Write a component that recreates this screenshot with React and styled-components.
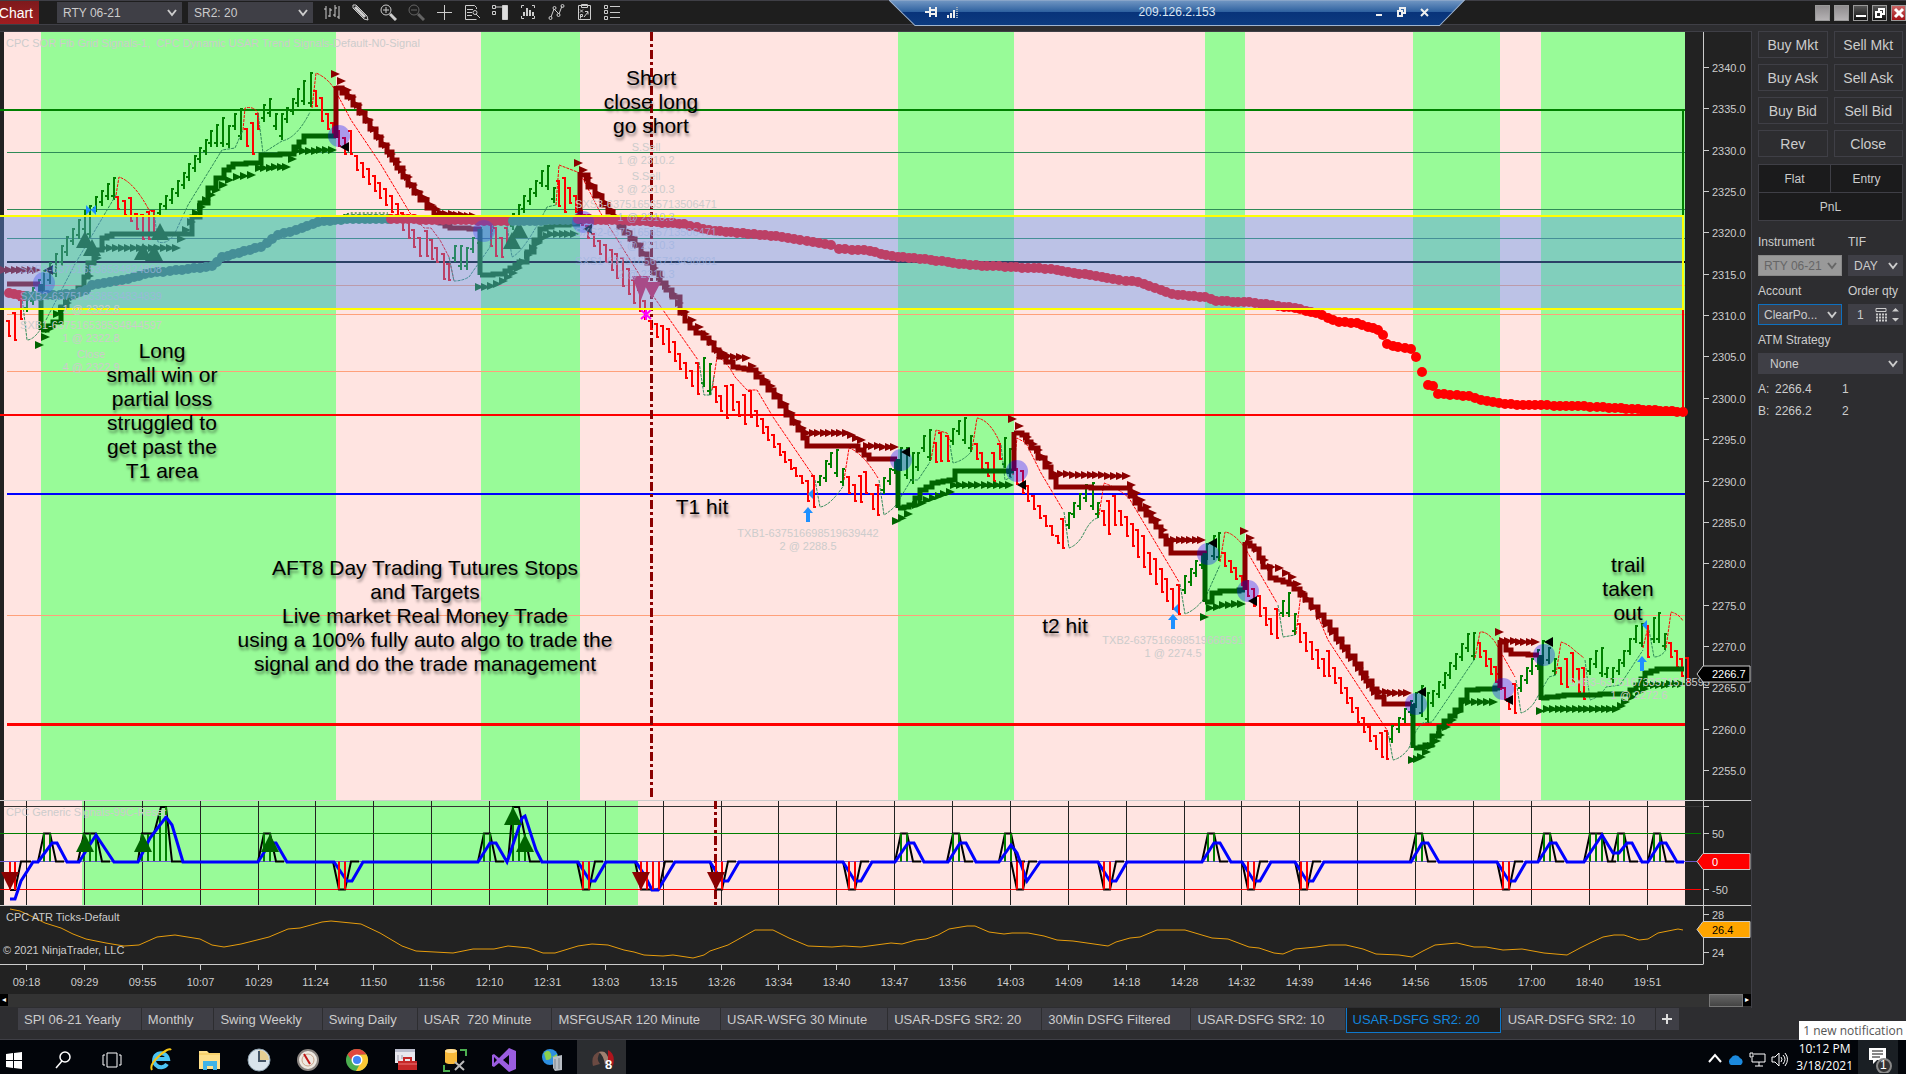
import { useState } from 'react';
import styled, { createGlobalStyle, css } from 'styled-components';

const STEP = 5.79;
const VIEW_W = 1751;
const PINK = '#ffe4e1';
const GREEN = '#98fb98';

/* ---------- chart data ---------- */

const mainBands = [[41, 336], [481, 580], [898, 1014], [1205, 1245], [1413, 1500], [1541, 1685]];

const levels = [
  { y: 152.5, color: '#2e8b57', w: 1 },
  { y: 209.5, color: '#2e8b57', w: 1 },
  { y: 238.5, color: '#2e8b57', w: 1 },
  { y: 262, color: '#000', w: 2 },
  { y: 285.5, color: '#ffa07a', w: 1 },
  { y: 314.5, color: '#ffa07a', w: 1 },
  { y: 371.5, color: '#ffa07a', w: 1 },
  { y: 494, color: '#0000ff', w: 2 },
  { y: 615.5, color: '#ffa07a', w: 1 },
  { y: 724.5, color: '#ff0000', w: 3 },
  { y: 110, color: '#008000', w: 2, from: 0 },
  { y: 415, color: '#ff0000', w: 2, from: 0 },
];

// [up, [x, high, low], ...] - bars between two points are interpolated
const barRuns = [
  [0, [9, 320, 337], [15, 312, 341], [21, 299, 320]],
  [1, [27, 296, 312], [56, 253, 277], [73, 228, 245], [85, 210, 233], [90, 205, 238], [96, 196, 212], [108, 183, 200], [114, 177, 200]],
  [0, [118, 196, 210], [125, 200, 216], [131, 197, 222], [137, 213, 230], [143, 214, 240], [149, 211, 240], [154, 210, 233]],
  [1, [160, 203, 217], [178, 180, 197], [189, 163, 181], [200, 147, 163], [211, 130, 147], [223, 117, 147], [229, 125, 148], [235, 113, 130], [241, 108, 140]],
  [0, [247, 128, 147], [253, 122, 155], [258, 113, 130]],
  [1, [264, 104, 122], [270, 98, 117], [276, 113, 130], [282, 113, 140], [287, 107, 123], [298, 88, 107], [304, 80, 105], [311, 72, 107]],
  [0, [316, 90, 107], [322, 97, 122], [328, 113, 130], [333, 122, 138], [345, 137, 155], [351, 130, 155], [357, 155, 171], [392, 195, 213], [420, 237, 257], [427, 230, 257], [437, 247, 263], [444, 253, 280], [449, 263, 281]],
  [1, [455, 245, 262], [461, 245, 270], [467, 247, 270], [473, 237, 253], [480, 227, 247]],
  [0, [491, 220, 247], [496, 227, 257], [502, 237, 258], [507, 227, 247]],
  [1, [513, 213, 230], [524, 195, 213], [536, 180, 197], [542, 170, 187], [548, 165, 190], [554, 187, 203]],
  [0, [559, 180, 207], [565, 177, 213], [570, 187, 204], [576, 195, 213], [588, 225, 239], [600, 240, 255], [623, 257, 287], [645, 300, 320], [651, 320, 330], [669, 328, 353], [680, 353, 370], [692, 370, 387], [698, 362, 395]],
  [1, [704, 357, 387], [710, 363, 395]],
  [0, [716, 386, 403], [721, 395, 412], [727, 385, 419], [733, 384, 411], [739, 401, 417], [745, 394, 425], [751, 390, 418], [757, 410, 427], [802, 475, 484], [808, 480, 502], [814, 475, 508]],
  [1, [820, 475, 486], [826, 460, 482], [831, 452, 468], [837, 449, 477], [843, 468, 486]],
  [0, [849, 476, 494], [855, 484, 502], [861, 475, 503], [866, 471, 494], [873, 493, 510], [878, 484, 516]],
  [1, [884, 477, 494], [890, 468, 485], [895, 458, 474], [901, 447, 471], [907, 447, 479], [913, 452, 484], [918, 452, 471], [924, 435, 452], [930, 429, 461]],
  [0, [936, 442, 463], [941, 432, 462], [948, 435, 462]],
  [1, [953, 428, 445], [959, 420, 435], [965, 417, 444], [971, 435, 452]],
  [0, [977, 443, 460], [982, 452, 470], [988, 462, 477], [994, 452, 482], [1000, 443, 460]],
  [1, [1005, 437, 468], [1010, 448, 477]],
  [0, [1017, 468, 485], [1023, 470, 494], [1028, 485, 502], [1058, 535, 544], [1063, 518, 549]],
  [1, [1069, 512, 529], [1074, 502, 518], [1080, 493, 510], [1086, 484, 502], [1093, 482, 510], [1098, 502, 518]],
  [0, [1104, 510, 526], [1109, 500, 535], [1115, 495, 526], [1121, 510, 526], [1144, 535, 568], [1150, 552, 575], [1156, 558, 585], [1173, 588, 610], [1179, 584, 615]],
  [1, [1185, 575, 594], [1196, 560, 577], [1207, 543, 560], [1214, 535, 560], [1219, 532, 561]],
  [0, [1225, 552, 567], [1242, 575, 586], [1248, 580, 597], [1260, 595, 617], [1271, 618, 635], [1277, 608, 639]],
  [1, [1283, 600, 617], [1289, 592, 617], [1295, 613, 635]],
  [0, [1300, 623, 643], [1324, 658, 677], [1329, 650, 677], [1335, 667, 684], [1364, 717, 733], [1376, 735, 750], [1382, 732, 758], [1387, 730, 760]],
  [1, [1392, 725, 743], [1405, 708, 723], [1416, 692, 708], [1422, 685, 717], [1428, 692, 723], [1433, 690, 707], [1456, 653, 670], [1468, 633, 652], [1474, 632, 660]],
  [0, [1480, 642, 658], [1491, 658, 675], [1500, 673, 690], [1509, 700, 710], [1515, 683, 714]],
  [1, [1521, 675, 692], [1532, 658, 675], [1543, 640, 664], [1549, 647, 664], [1555, 658, 675]],
  [0, [1561, 667, 685], [1567, 658, 688], [1573, 652, 683], [1579, 668, 693], [1584, 667, 700]],
  [1, [1590, 658, 675], [1596, 650, 668], [1602, 647, 677], [1607, 667, 678], [1613, 667, 683], [1624, 650, 667], [1636, 625, 643], [1642, 623, 647]],
  [0, [1648, 625, 658]],
  [1, [1654, 617, 643], [1659, 612, 643], [1665, 633, 650]],
  [0, [1671, 642, 658], [1682, 658, 677], [1688, 657, 683]],
];

const stops = [
  {
    color: '#8b0000',
    line: [[7, 284], [40, 284]],
    marks: [[3, 270], [35, 270]],
  },
  {
    color: '#006400',
    drop: [41, 284, 330],
    line: [[41, 330], [53, 322], [61, 307], [67, 297], [78, 288], [84, 277], [88, 263], [94, 250], [102, 238], [112, 234], [188, 234], [192, 217], [200, 203], [208, 188], [216, 178], [224, 170], [233, 164], [253, 163], [261, 155], [286, 154], [294, 147], [304, 136], [336, 136]],
    marks: [[38, 345], [44, 337], [48, 329], [56, 314], [66, 303], [80, 290], [88, 276], [96, 258], [103, 248], [175, 248], [185, 230], [195, 213], [205, 200], [215, 190], [228, 180], [236, 177], [250, 175], [258, 168], [285, 167], [296, 151], [331, 150]],
  },
  {
    color: '#8b0000',
    drop: [336, 86, 138],
    line: [[336, 88], [347, 97], [359, 113], [376, 137], [392, 160], [408, 185], [420, 200], [434, 215], [440, 223], [450, 228], [481, 229]],
    marks: [[334, 74], [340, 81], [346, 90], [362, 112], [379, 137], [396, 162], [412, 185], [430, 205], [440, 213], [472, 216]],
  },
  {
    color: '#006400',
    drop: [480, 229, 275],
    line: [[480, 275], [500, 274], [510, 268], [519, 262], [527, 252], [534, 240], [540, 229], [552, 225], [580, 224]],
    marks: [[478, 287], [490, 286], [502, 281], [512, 273], [522, 262], [532, 248], [541, 238], [550, 234], [573, 234]],
  },
  {
    color: '#8b0000',
    drop: [580, 172, 224],
    line: [[580, 175], [588, 187], [602, 205], [619, 227], [635, 245], [647, 263], [660, 283], [672, 297], [680, 313], [690, 328], [709, 343], [719, 357], [733, 367], [749, 370], [762, 383], [774, 397], [786, 415], [798, 430], [807, 446], [853, 446], [869, 459], [897, 459]],
    marks: [[577, 163], [582, 170], [591, 185], [605, 203], [637, 245], [653, 268], [684, 312], [691, 320], [704, 334], [717, 350], [727, 356], [745, 358], [757, 373], [770, 386], [784, 404], [796, 422], [806, 433], [845, 433], [860, 440], [866, 446], [893, 447]],
  },
  {
    color: '#006400',
    drop: [898, 459, 508],
    line: [[898, 508], [909, 505], [920, 490], [932, 483], [949, 480], [955, 471], [1014, 471]],
    marks: [[895, 521], [901, 518], [907, 514], [915, 505], [926, 500], [949, 492], [953, 485], [1008, 485]],
  },
  {
    color: '#8b0000',
    drop: [1014, 432, 471],
    line: [[1014, 433], [1022, 435], [1031, 448], [1045, 467], [1056, 487], [1125, 488], [1135, 503], [1156, 527], [1171, 553], [1207, 553]],
    marks: [[1011, 419], [1018, 426], [1026, 437], [1037, 450], [1047, 463], [1054, 474], [1125, 476], [1135, 493], [1156, 520], [1168, 540], [1200, 540]],
  },
  {
    color: '#006400',
    drop: [1205, 553, 602],
    line: [[1205, 602], [1208, 602], [1212, 593], [1220, 591], [1245, 590]],
    marks: [[1203, 617], [1209, 608], [1222, 605], [1240, 604]],
  },
  {
    color: '#8b0000',
    drop: [1245, 542, 590],
    line: [[1245, 543], [1254, 549], [1263, 567], [1270, 578], [1289, 584], [1305, 600], [1324, 622], [1342, 647], [1361, 673], [1377, 697], [1384, 704], [1411, 704]],
    marks: [[1243, 531], [1249, 538], [1263, 560], [1270, 567], [1278, 568], [1291, 577], [1306, 599], [1326, 624], [1345, 649], [1364, 677], [1374, 692], [1406, 693]],
  },
  {
    color: '#006400',
    drop: [1413, 704, 748],
    line: [[1414, 748], [1425, 745], [1439, 727], [1455, 710], [1467, 690], [1500, 688]],
    marks: [[1411, 760], [1420, 757], [1430, 746], [1439, 735], [1457, 712], [1462, 702], [1492, 702]],
  },
  {
    color: '#8b0000',
    drop: [1500, 640, 688],
    line: [[1500, 642], [1506, 650], [1511, 654], [1539, 655]],
    marks: [[1498, 632], [1502, 641], [1534, 642]],
  },
  {
    color: '#006400',
    drop: [1541, 655, 700],
    line: [[1541, 698], [1564, 695], [1624, 694], [1636, 685], [1645, 673], [1657, 669], [1684, 669]],
    marks: [[1539, 711], [1546, 709], [1615, 709], [1624, 702], [1638, 692], [1647, 685], [1680, 684]],
  },
];

const trend = [
  { color: '#ff0000', pts: [[9, 293], [24, 296]] },
  { color: '#2e8b57', pts: [[27, 296], [53, 295], [73, 294], [86, 290], [92, 285], [122, 280], [151, 273], [188, 269], [212, 266], [222, 257], [261, 247], [278, 235], [302, 228], [318, 222], [347, 219], [388, 219]] },
  { color: '#ff0000', pts: [[391, 219], [507, 221]] },
  { color: '#2e8b57', pts: [[513, 221], [574, 220]] },
  { color: '#ff0000', pts: [[578, 219], [640, 221], [684, 224], [709, 230], [782, 237], [831, 245], [839, 249], [864, 250], [892, 256], [925, 259], [970, 265], [1051, 269], [1113, 279], [1138, 282], [1172, 294], [1205, 297], [1216, 301], [1249, 302], [1295, 308], [1316, 313], [1339, 322], [1357, 323], [1378, 330], [1383, 335], [1387, 344], [1398, 347], [1411, 349], [1416, 357], [1422, 372], [1428, 385], [1433, 386], [1438, 394], [1469, 396], [1481, 400], [1499, 403], [1523, 405], [1578, 406], [1615, 408], [1683, 412]] },
];

const RED_ARCS = [
  'M116 195L119 177Q134 182 149 210L154 212',
  'M243 130L245 108Q254 106 258 113',
  'M312 108L316 73Q328 78 335 90L351 120L380 163L410 213L424 228H431L440 240L449 257L454 281',
  'M491 240L495 215',
  'M556 205L559 165L580 173L600 212L649 290L698 360',
  'M712 390L717 357Q726 360 735 377L747 390H757L773 417L814 477',
  'M844 480L849 448Q862 452 878 478',
  'M931 460L936 430L947 433L950 440',
  'M972 450L977 418Q990 420 1000 443',
  'M1013 475L1017 438L1026 443L1041 473L1063 510',
  'M1099 515L1104 483Q1118 488 1129 498L1179 582',
  'M1220 562L1225 532Q1234 533 1245 548L1277 603',
  'M1296 634L1301 593L1314 607L1328 640L1387 730',
  'M1475 658L1480 632Q1487 631 1495 642L1515 677',
  'M1556 674L1561 642Q1568 644 1574 650L1584 658',
  'M1643 648L1648 627',
  'M1666 648L1671 612Q1679 614 1683 621',
];

const GREEN_ARCS = [
  'M22 297L27 340Q36 340 47 318L75 264L116 195',
  'M154 212L158 242Q168 245 175 233L188 205L222 150L235 148L243 130',
  'M258 113L263 153L282 141Q297 138 310 112',
  'M449 257L454 281Q462 281 469 277L490 247L492 226',
  'M507 225L512 257Q524 252 547 207L556 205',
  'M699 362L704 395H711L714 375',
  'M815 480L820 507Q830 506 844 485',
  'M879 480L884 515Q892 510 896 505L911 480H918L930 462',
  'M950 445L953 463Q963 461 971 452',
  'M1001 445L1005 480L1012 477',
  'M1064 512L1069 548Q1078 545 1084 533Q1091 519 1098 518',
  'M1180 584L1185 614Q1198 609 1207 594L1220 565',
  'M1278 605L1283 637L1295 635',
  'M1388 732L1393 760Q1402 758 1409 748Q1416 727 1423 723L1432 722L1474 660',
  'M1516 680L1521 713Q1528 711 1534 703L1549 677L1556 675',
  'M1585 660L1590 700Q1600 697 1606 687L1620 685L1643 650',
  'M1649 630L1654 657Q1661 657 1666 650',
];

const circles = [[44, 283], [339, 136], [484, 231], [583, 222], [901, 460], [1017, 471], [1208, 554], [1248, 591], [1416, 704], [1503, 689], [1544, 655]];
const backMarks = [[49, 270], [345, 147], [588, 229], [906, 452], [1022, 485], [1213, 543], [1253, 601], [1422, 692], [1509, 700], [1549, 642]];
const bigUps = [[85, 240], [92, 248], [160, 232], [143, 252], [154, 253], [519, 230], [512, 241]];
const entryArrows = [[808, 507], [1173, 614], [1642, 656]];
const fillMarks = [[808, 494], [1173, 609], [1642, 625]];

const priceTicks = Array.from({ length: 18 }, (_, i) => ({ y: 68 + i * 41.35, label: (2340 - i * 5).toFixed(1) }));

const ghostNotes = [
  [91, 269, 'SXB3-637516538534824808'],
  [91, 296, 'SXB2-637516538534834839'],
  [91, 309, '1 @ 2322.8'],
  [91, 325, 'SXB1-637516538534844597'],
  [91, 338, '1 @ 2322.8'],
  [91, 354, 'Close'],
  [91, 367, '4 @ 2322.9'],
  [646, 147, 'S.Sell'],
  [646, 160, '1 @ 2310.2'],
  [646, 176, 'S.Sell'],
  [646, 189, '3 @ 2310.3'],
  [646, 204, 'SXS3-637516565713506471'],
  [646, 217, '1 @ 2310.3'],
  [646, 232, 'SXS2-637516565713506471'],
  [646, 245, '1 @ 2310.3'],
  [646, 261, 'SXS1-637516565713496601'],
  [646, 274, '2 @ 2310.3'],
  [808, 533, 'TXB1-637516698519639442'],
  [808, 546, '2 @ 2288.5'],
  [1173, 640, 'TXB2-637516698519668591'],
  [1173, 653, '1 @ 2274.5'],
  [1639, 682, 'SXB3-637516733571518595'],
  [1639, 695, '1 @ 2272.6'],
];

const comments = [
  [651, 102, ['Short', 'close long', 'go short']],
  [162, 411, ['Long', 'small win or', 'partial loss', 'struggled to', 'get past the', 'T1 area']],
  [425, 616, ['AFT8 Day Trading Tutures Stops', 'and Targets', 'Live market Real Money Trade', 'using a 100% fully auto algo to trade the', 'signal and do the trade management']],
  [702, 507, ['T1 hit']],
  [1065, 626, ['t2 hit']],
  [1628, 589, ['trail', 'taken', 'out']],
];

const times = ['09:18', '09:29', '09:55', '10:07', '10:29', '11:24', '11:50', '11:56', '12:10', '12:31', '13:03', '13:15', '13:26', '13:34', '13:40', '13:47', '13:56', '14:03', '14:09', '14:18', '14:28', '14:32', '14:39', '14:46', '14:56', '15:05', '17:00', '18:40', '19:51'];
const timeX = (i) => Math.round(26 + i * 57.88) + 0.5;

const ZERO = 861.5;

// every pulse: first bar x, direction, number of bars
const pulses = [
  [44, 1, 2], [84, 1, 3], [264, 1, 2], [339, -1, 2], [484, 1, 2], [583, -1, 2], [641, -1, 4], [716, -1, 2], [849, -1, 2],
  [901, 1, 2], [953, 1, 2], [1005, 1, 2], [1017, -1, 2], [1104, -1, 2], [1208, 1, 2], [1248, -1, 2], [1301, -1, 2],
  [1416, 1, 2], [1503, -1, 2], [1544, 1, 2], [1590, 1, 3], [1618, 1, 2], [1654, 1, 2],
];

const blueLine = 'M10 899H15L21 881L33 862H38L52 843H57L67 862H79L96 835L114 862H138L150 838L166 817L172 825L183 862'
  + 'H258L270 843H276L287 862H334L347 881H352L363 862H478L490 843H496L507 862L522 818L525 816L536 850L542 862H578L590 881H595L606 862'
  + 'H636L645 876L652 890H658L675 862H710L722 881H728L739 862H843L855 881H861L872 862H895L908 843H914L924 862H948L960 843H966L976 862'
  + 'H999L1011 845L1017 853L1027 881L1040 862H1098L1110 881H1116L1127 862H1202L1214 843H1220L1231 862H1242L1254 881H1260L1271 862'
  + 'H1295L1307 881H1313L1324 862H1411L1422 843H1428L1439 862H1497L1509 881H1515L1526 862H1538L1550 843H1556L1567 862'
  + 'H1584L1602 835L1613 853H1619L1627 843H1632L1642 862H1648L1660 843H1666L1677 862H1684';

const signalUps = [[85, 843], [143, 843], [270, 843], [513, 816], [525, 843]];
const signalDowns = [[10, 881], [641, 881], [716, 881]];

const atr = [
  [10, 909], [20, 911], [33, 917], [45, 923], [61, 928], [73, 934], [86, 939], [106, 943], [124, 946], [139, 945], [157, 937], [175, 935], [200, 939], [212, 945], [224, 947], [241, 944], [269, 937], [288, 929],
  [300, 928], [322, 922], [331, 921], [361, 924], [380, 933], [402, 946], [416, 951], [453, 953], [473, 949], [494, 949], [508, 946], [529, 948], [543, 953], [555, 953], [578, 946], [592, 944], [608, 945], [624, 950],
  [634, 952], [644, 955], [663, 956], [673, 955], [693, 958], [704, 955], [710, 951], [728, 945], [755, 930], [773, 930], [789, 938], [808, 946], [832, 947], [844, 946], [861, 947], [891, 943], [902, 944], [916, 940], [926, 939],
  [938, 935], [949, 929], [967, 926], [975, 926], [989, 932], [1004, 934], [1012, 933], [1028, 933], [1044, 936], [1057, 940], [1073, 941], [1108, 946], [1116, 942], [1130, 938], [1140, 937], [1157, 930], [1185, 930],
  [1212, 938], [1228, 939], [1249, 947], [1259, 948], [1274, 953], [1283, 954], [1295, 949], [1316, 947], [1329, 945], [1346, 945], [1363, 949], [1376, 954], [1399, 955], [1412, 957], [1423, 951], [1435, 945], [1457, 943],
  [1474, 947], [1486, 947], [1503, 950], [1522, 949], [1544, 953], [1567, 955], [1580, 948], [1590, 943], [1603, 937], [1614, 935], [1624, 935], [1639, 940], [1648, 939], [1658, 933], [1678, 929], [1683, 930],
];

/* ---------- path builders ---------- */

function resample(points) {
  const out = [];
  for (let i = 0; i < points.length - 1; i++) {
    const a = points[i];
    const b = points[i + 1];
    const n = Math.max(1, Math.round((b[0] - a[0]) / STEP));
    for (let k = 0; k < n; k++) {
      out.push(a.map((v, j) => v + ((b[j] - v) * k) / n));
    }
  }
  out.push(points[points.length - 1]);
  return out.map((p) => p.map(Math.round));
}

const toBars = (up, points) =>
  resample(points)
    .map(([x, hi, lo]) => {
      const open = up ? lo - 4 : hi + 1;
      const close = up ? hi + 1 : lo - 1;
      return `M${x} ${hi}V${lo}M${x - 3} ${open}H${x}M${x} ${close}H${x + 2}`;
    })
    .join('');

const toSteps = (points) => {
  const pts = resample(points);
  return pts.map(([x, y], i) => (i === 0 ? `M${x} ${y}` : `H${x}V${y}`)).join('');
};

const toMarks = (points) =>
  resample(points).map(([x, y]) => `M${x - 3} ${y - 4}L${x + 6} ${y}L${x - 3} ${y + 4}Z`).join('');

const toLine = (points) => 'M' + points.map((p) => p.join(' ')).join('L');

const pulseOutline = ([x, dir, n]) => {
  const end = x + (n - 1) * 6;
  const top = ZERO - dir * 28;
  return `M${x - 6} ${ZERO}L${x} ${top}H${end}L${end + 6} ${ZERO}H${end + 14}`;
};

const pulseBars = ([x, dir, n]) =>
  Array.from({ length: n }, (_, i) => `M${x + i * 6} ${ZERO}V${ZERO - dir * 28}`).join('');

/* ---------- chart panes ---------- */

function Drawing({ top, height, children }) {
  return (
    <DrawingSvg viewBox={`0 ${top} ${VIEW_W} ${height}`} preserveAspectRatio="none" aria-hidden="true">
      {children}
    </DrawingSvg>
  );
}

const place = (x, y, top, height) => ({
  left: `${(x / VIEW_W) * 100}%`,
  top: `${((y - top) / height) * 100}%`,
});

function PricePane() {
  const top = 32;
  const height = 768;
  return (
    <MainPane>
      <Drawing top={top} height={height}>
        <rect x="4" y="32" width="1681" height="768" fill={PINK} />
        {mainBands.map(([a, b]) => <rect key={a} x={a} y="32" width={b - a} height="768" fill={GREEN} />)}
        {levels.map((l) => <path key={l.y} d={`M${l.from ?? 7} ${l.y}H1685`} stroke={l.color} strokeWidth={l.w} />)}
        <path d="M1683 110V216" stroke="#008000" strokeWidth="2" />
        <path d="M1683 309V412" stroke="#f00" strokeWidth="2" />
        <path d="M651.5 32V800" stroke="#8b0000" strokeWidth="3" strokeDasharray="9 3 3 3" />
        {barRuns.map(([up, ...pts], i) => (
          <path key={i} d={toBars(up, pts)} stroke={up ? '#008000' : '#f00'} strokeWidth="2" fill="none" />
        ))}
        <path d="M343 215L350 213H388" stroke="#006400" strokeDasharray="2 2" fill="none" />
        <path d={RED_ARCS.join('')} stroke="#f00" strokeDasharray="3 1" fill="none" />
        <path d={GREEN_ARCS.join('')} stroke="#2e8b57" strokeDasharray="3 1" fill="none" />
        {bigUps.map(([x, y]) => <path key={x} d={`M${x} ${y - 9}L${x + 9} ${y + 8}H${x - 9}Z`} fill="#006400" />)}
        {stops.map((s, i) => (
          <g key={i}>
            <path d={toSteps(s.line)} stroke={s.color} strokeWidth="5" fill="none" />
            {s.drop && <path d={`M${s.drop[0]} ${s.drop[1]}V${s.drop[2]}`} stroke={s.color} strokeWidth="5" />}
            <path d={toMarks(s.marks)} fill={s.color} />
          </g>
        ))}
        <path d="M632 276H650L641 300Z M643 282H661L652 299Z" fill="#dc143c" />
        {trend.map((t, i) => (
          <g key={i} fill={t.color}>
            {resample(t.pts).map(([x, y]) => <circle key={x} cx={x} cy={y} r="5" />)}
          </g>
        ))}
        {circles.map(([x, y]) => <circle key={x} cx={x} cy={y} r="11" fill="#0000ff" fillOpacity="0.33" />)}
        {backMarks.map(([x, y]) => <path key={x} d={`M${x - 5} ${y}L${x + 4} ${y - 5}V${y + 5}Z`} fill="#000" />)}
        <path d="M86 205L91 210L86 215ZM96 205L91 210L96 215Z" fill="#1e90ff" />
        <path d="M641 310L651 319M641 319L651 310M646 309V320" stroke="#f0f" strokeWidth="2" />
        {entryArrows.map(([x, y]) => (
          <path key={x} d={`M${x} ${y}L${x + 5} ${y + 6}H${x + 2}V${y + 15}H${x - 2}V${y + 6}H${x - 5}Z`} fill="#1e90ff" />
        ))}
        {fillMarks.map(([x, y]) => <path key={x} d={`M${x} ${y}L${x + 5} ${y - 5}V${y + 5}Z`} fill="#1e90ff" />)}
        <rect x="0" y="216" width="1683" height="93" fill="#6495ed" fillOpacity="0.43" />
        <path d="M0 216H1683V309H0" stroke="#ff0" strokeWidth="2" fill="none" />
        <path d="M1703.5 32V800" stroke="#ccc" />
        {priceTicks.map((t) => <path key={t.label} d={`M1704 ${Math.round(t.y) - 0.5}h5`} stroke="#ccc" />)}
      </Drawing>
      {ghostNotes.map(([x, y, text]) => (
        <Ghost key={`${x}-${y}`} $faded={y > 216 && y < 309} style={place(x, y, top, height)}>{text}</Ghost>
      ))}
      <Ghost $start style={place(6, 43, top, height)}>
        {'CPC SOR Fib Grid Signals-1,  CPC Dynamic USAR Trend Signals-Default-N0-Signal'}
      </Ghost>
      {comments.map(([x, y, lines]) => (
        <Comment key={lines[0]} style={place(x, y, top, height)}>
          {lines.map((l) => <span key={l}>{l}</span>)}
        </Comment>
      ))}
      {priceTicks.map((t) => (
        <AxisLabel key={t.label} style={place(1712, t.y, top, height)}>{t.label}</AxisLabel>
      ))}
      <Drawing top={top} height={height}>
        <path d="M1697 674L1703 666H1750V682H1703Z" fill="#000" stroke="#ccc" />
      </Drawing>
      <AxisLabel $color="#fff" style={place(1712, 674, top, height)}>2266.7</AxisLabel>
    </MainPane>
  );
}

function SignalPane() {
  const top = 800;
  const height = 105;
  const greens = pulses.filter((p) => p[1] > 0);
  const reds = pulses.filter((p) => p[1] < 0);
  return (
    <Pane $height={105}>
      <Drawing top={top} height={height}>
        <rect x="4" y="800" width="1681" height="105" fill={PINK} />
        <rect x="82" y="800" width="556" height="105" fill={GREEN} />
        <path d="M4 806.5H1703" stroke="#333" />
        {times.map((t, i) => <path key={t} d={`M${timeX(i)} 801V905`} stroke="#222" />)}
        <path d="M0 833.5H1701" stroke="#008000" />
        <path d="M0 861.5H1701" stroke="#6a5acd" />
        <path d="M0 889.5H1701" stroke="#f00" />
        <path d="M715.5 800V905" stroke="#8b0000" strokeWidth="3" strokeDasharray="9 3 3 3" />
        <path
          d={pulses.map(pulseOutline).join('')
            + 'M10 890H15L21 861.5H31M138 861L142 833.5H154L161 807H166L172 861.5H182M508 861L513 807H519L530 861.5H540'}
          stroke="#000"
          strokeWidth="2"
          fill="none"
        />
        <path d={greens.map(pulseBars).join('') + 'M142 861V834M148 861V834M154 861V834M160 861V812M166 861V807M513 861V807M519 861V820M525 861V834'} stroke="#008000" strokeWidth="2" />
        <path d={blueLine} stroke="#00f" strokeWidth="3" fill="none" />
        <path d={reds.map(pulseBars).join('') + 'M10 862V890M15 862V890'} stroke="#f00" strokeWidth="2" />
        {signalUps.map(([x, y]) => <path key={x} d={`M${x} ${y - 9}L${x + 9} ${y + 9}H${x - 9}Z`} fill="#006400" />)}
        {signalDowns.map(([x, y]) => <path key={x} d={`M${x} ${y + 9}L${x + 9} ${y - 9}H${x - 9}Z`} fill="#8b0000" />)}
        <path d="M0 800.5H1751M1703.5 800V905M1704 806.5h5M1704 833.5h5M1704 889.5h5" stroke="#ccc" />
        <path d="M1697 861.5L1703 853.5H1750V869.5H1703Z" fill="#f00" stroke="#ccc" />
      </Drawing>
      <Ghost $start style={place(6, 812, top, height)}>CPC Generic Signals-99C-Reset</Ghost>
      <AxisLabel style={place(1712, 834, top, height)}>50</AxisLabel>
      <AxisLabel $color="#fff" style={place(1712, 862, top, height)}>0</AxisLabel>
      <AxisLabel style={place(1712, 890, top, height)}>-50</AxisLabel>
    </Pane>
  );
}

function AtrPane() {
  const top = 905;
  const height = 59;
  return (
    <Pane $height={59}>
      <Drawing top={top} height={height}>
        <path d="M0 905.5H1751M1703.5 905V964M1704 914.5h5M1704 952.5h5" stroke="#ccc" />
        <path d={toLine(atr)} stroke="#e69c0c" fill="none" />
        <path d="M1697 929.5L1703 921.5H1750V937.5H1703Z" fill="#ffa500" stroke="#ccc" />
      </Drawing>
      <Label style={place(6, 917, top, height)}>CPC ATR Ticks-Default</Label>
      <Label style={place(3, 950, top, height)}>© 2021 NinjaTrader, LLC</Label>
      <AxisLabel style={place(1712, 915, top, height)}>28</AxisLabel>
      <AxisLabel $color="#000" style={place(1712, 930, top, height)}>26.4</AxisLabel>
      <AxisLabel style={place(1712, 953, top, height)}>24</AxisLabel>
    </Pane>
  );
}

function TimeAxis() {
  return (
    <Pane $height={30}>
      <Drawing top={964} height={30}>
        <path d="M0 964.5H1703.5" stroke="#ccc" />
        {times.map((t, i) => <path key={t} d={`M${timeX(i)} 965v5`} stroke="#ccc" />)}
      </Drawing>
      {times.map((t, i) => (
        <AxisLabel key={t} $center style={place(timeX(i), 982, 964, 30)}>{t}</AxisLabel>
      ))}
    </Pane>
  );
}

/* ---------- toolbar ---------- */

const toolIcons = [
  ['Bars', <path d="M2 2v13M0 5h2M6 4v9M4 12h2M6 6h2M11 1v12M9 11h2M11 4h2M15 2v13M13 13h2" />],
  ['Draw', <><path d="M1 1l3 0 11 11 1 4-4-1L1 4z" /><path d="M3 3l10 10" strokeWidth="3" /></>],
  ['Zoom in', <><circle cx="6" cy="6" r="5" /><path d="M6 3v6M3 6h6" /><path d="M10 10l6 6" strokeWidth="3" /></>],
  ['Zoom out', <g opacity="0.4"><circle cx="6" cy="6" r="5" /><path d="M3 6h6" /><path d="M10 10l6 6" strokeWidth="3" /></g>],
  ['Crosshair', <path d="M8.500 1v15M1 8.500h15" />],
  ['Databox', <path d="M12.500 5V3.500l-2-2H1.500v14h11M3 5.500h6M3 8.500h5M3 11.500h5M9 8.500a2 2 0 1 0 4 0a2 2 0 1 0-4 0M12 10l4 4" />],
  ['Chart trader', <><path d="M.5 1.500h3v3h-3zM.5 7.500h3v3h-3zM4 3h6" /><path d="M10.500 1.500h5v14h-5z" fill="#ddd" /></>],
  ['Data series', <><path d="M1.500 4V1.500H4M12 1.500h2.500V4M14.500 12v2.500H12M4 14.500H1.500V12" /><path d="M4 12V8M7 12V4M10 12V6M13 12V8" strokeWidth="2" /></>],
  ['Indicators', <path d="M3 13L6 5l5 5 3-8M1 14a1 1 0 1 0 3 0a1 1 0 1 0-3 0M5 4a1 1 0 1 0 3 0a1 1 0 1 0-3 0M9 11a1 1 0 1 0 3 0a1 1 0 1 0-3 0M13 2a1 1 0 1 0 3 0a1 1 0 1 0-3 0" />],
  ['Strategies', <path d="M2.500 1.500h12v14h-12zM5.500.5h6v3h-6zM4 5.500l3 3M7 5.500l-3 3M4.500 10.500v4M4.500 10.500h2v2h-2M8 13l4-5M9 7.500h3v3" />],
  ['Properties', <path d="M.5 1.500h3v3h-3zM.5 6.500h3v3h-3zM.5 12.500h3v3h-3zM6 2.500h10M6 8.500h10M6 13.500h10" />],
];

function Dropdown({ label, value, disabled, focused, indent }) {
  return (
    <SelectFrame $disabled={disabled} $focused={focused} $indent={indent}>
      <select aria-label={label} disabled={disabled} defaultValue={value}>
        <option>{value}</option>
      </select>
      <svg width="10" height="8" viewBox="0 0 10 8" aria-hidden="true">
        <path d="M1 1l4 5 4-5" fill="none" stroke={disabled ? '#666' : '#ccc'} strokeWidth="2" />
      </svg>
    </SelectFrame>
  );
}

function RemoteBar() {
  return (
    <RemoteBarWrapper>
      <svg viewBox="0 0 575 26" preserveAspectRatio="none" aria-hidden="true">
        <defs>
          <linearGradient id="remote" x1="0" x2="0" y1="0" y2="1">
            <stop offset="0" stopColor="#7398c4" />
            <stop offset="0.47" stopColor="#2d609f" />
            <stop offset="0.48" stopColor="#08337a" />
            <stop offset="1" stopColor="#0d3b80" />
          </linearGradient>
        </defs>
        <path d="M0 0H575L550 25.5H26Z" fill="url(#remote)" stroke="#9fb4d0" />
      </svg>
      <RemoteContent>
        <RemoteIcons>
          <button aria-label="Pin">
            <svg width="12" height="10" viewBox="0 0 12 10"><path d="M0 5h4M5 0v10M5 3h6M5 7h6M11 0v10" stroke="#eee" strokeWidth="2" fill="none" /></svg>
          </button>
          <svg width="12" height="12" viewBox="0 0 12 12"><path d="M1 12V9M4 12V7M7 12V4" stroke="#eee" strokeWidth="2" /><path d="M10 12V0" stroke="#9ab" strokeWidth="2" strokeDasharray="1 1" /></svg>
        </RemoteIcons>
        <span>209.126.2.153</span>
        <RemoteIcons $wide>
          <button aria-label="Minimize connection"><svg width="7" height="12" viewBox="0 0 7 12"><path d="M0 9h6" stroke="#eee" strokeWidth="2" /></svg></button>
          <button aria-label="Restore connection"><svg width="9" height="10" viewBox="0 0 9 10"><path d="M1 4h4v5H1zM3 3V1h5v5H6" stroke="#eee" fill="none" strokeWidth="2" /></svg></button>
          <button aria-label="Close connection"><svg width="9" height="9" viewBox="0 0 9 9"><path d="M1 1l7 7M8 1L1 8" stroke="#eee" strokeWidth="2" /></svg></button>
        </RemoteIcons>
      </RemoteContent>
    </RemoteBarWrapper>
  );
}

function Toolbar() {
  return (
    <ToolbarWrapper>
      <ChartMenu>Chart</ChartMenu>
      <ToolSelects>
        <Dropdown label="Chart instrument" value="RTY 06-21" />
        <Dropdown label="Interval" value="SR2: 20" />
      </ToolSelects>
      <ToolIcons>
        {toolIcons.map(([label, art]) => (
          <ToolButton key={label} aria-label={label}>
            <svg width="17" height="17" viewBox="0 0 17 17" fill="none" stroke="#ccc">{art}</svg>
          </ToolButton>
        ))}
      </ToolIcons>
      <WindowButtons>
        <WindowButton aria-label="Link instrument" $tone="light" />
        <WindowButton aria-label="Link interval" $tone="light" />
        <WindowButton aria-label="Minimize"><svg width="12" height="12" viewBox="0 0 12 12"><path d="M1 9h10" stroke="#fff" strokeWidth="2" /></svg></WindowButton>
        <WindowButton aria-label="Restore"><svg width="12" height="12" viewBox="0 0 12 12"><path d="M2 5h5v5H2zM5 4V2h5v5H8" stroke="#fff" strokeWidth="2" fill="none" /></svg></WindowButton>
        <WindowButton aria-label="Close window" $tone="red"><svg width="12" height="12" viewBox="0 0 12 12"><path d="M2 2l8 8M10 2l-8 8" stroke="#fff" strokeWidth="3" /></svg></WindowButton>
      </WindowButtons>
      <RemoteBar />
    </ToolbarWrapper>
  );
}

/* ---------- chart trader ---------- */

const orderButtons = ['Buy Mkt', 'Sell Mkt', 'Buy Ask', 'Sell Ask', 'Buy Bid', 'Sell Bid', 'Rev', 'Close'];

function ChartTrader() {
  const [qty, setQty] = useState('1');
  return (
    <TraderPanel>
      <OrderGrid>
        {orderButtons.map((b) => <OrderButton key={b}>{b}</OrderButton>)}
      </OrderGrid>
      <PositionGrid>
        <span>Flat</span>
        <span>Entry</span>
        <span>PnL</span>
      </PositionGrid>
      <FieldGrid>
        <Field as="div"><span>Instrument</span><Dropdown label="Instrument" value="RTY 06-21" disabled /></Field>
        <Field as="div"><span>TIF</span><Dropdown label="TIF" value="DAY" /></Field>
        <Field as="div"><span>Account</span><Dropdown label="Account" value="ClearPo..." focused /></Field>
        <Field>
          <span>Order qty</span>
          <QtyBox>
            <input value={qty} onChange={(e) => setQty(e.target.value)} />
            <svg width="24" height="15" viewBox="0 0 24 15" aria-hidden="true">
              <path d="M1 1.5h10v3H1z" fill="none" stroke="#ccc" />
              <path d="M1 7.5h11M1 10.5h11M1 13.5h11" stroke="#ccc" strokeWidth="2" strokeDasharray="2 1" />
              <path d="M17 4.500L20.500 1L24 4.500ZM17 11L20.500 14.500L24 11Z" fill="#ccc" />
            </svg>
          </QtyBox>
        </Field>
        <Field as="div" $full><span>ATM Strategy</span><Dropdown label="ATM Strategy" value="None" indent /></Field>
      </FieldGrid>
      <Quotes>
        <tbody>
          <tr><th scope="row">A:</th><td>2266.4</td><td>1</td></tr>
          <tr><th scope="row">B:</th><td>2266.2</td><td>2</td></tr>
        </tbody>
      </Quotes>
    </TraderPanel>
  );
}

/* ---------- workspace tabs ---------- */

const tabs = [
  'SPI 06-21 Yearly', 'Monthly', 'Swing Weekly', 'Swing Daily', 'USAR  720 Minute', 'MSFGUSAR 120 Minute', 'USAR-WSFG 30 Minute',
  'USAR-DSFG SR2: 20', '30Min DSFG Filtered', 'USAR-DSFG SR2: 10', 'USAR-DSFG SR2: 20', 'USAR-DSFG SR2: 10',
];

function Tabs() {
  const [active, setActive] = useState(10);
  return (
    <TabStrip>
      {tabs.map((t, i) => (
        <Tab key={i} $active={i === active} onClick={() => setActive(i)}>{t}</Tab>
      ))}
      <AddTab aria-label="Add tab">
        <svg width="12" height="12" viewBox="0 0 12 12"><path d="M6 1v10M1 6h10" stroke="#ddd" strokeWidth="2" /></svg>
      </AddTab>
    </TabStrip>
  );
}

/* ---------- taskbar ---------- */

const apps = [
  ['Start', <path d="M4 6l7-1v7H4zM12 5l8-1v8h-8zM4 13h7v7l-7-1zM12 13h8v8l-8-1z" fill="#fff" />],
  ['Search', <g fill="none" stroke="#fff" strokeWidth="1.500"><circle cx="14" cy="9" r="5" /><path d="M11 13l-6 7" /></g>],
  ['Task view', <path d="M7 5h10v14H7zM5 7H3v10h2M19 7h2v10h-2" fill="none" stroke="#fff" />],
  ['Internet Explorer', <><path d="M18 16a7 7 0 1 1 1-5H7" fill="none" stroke="#4cc5f4" strokeWidth="4" /><path d="M3 22Q0 17 10 8T22 2" fill="none" stroke="#f5c518" strokeWidth="2" /></>],
  ['File Explorer', <><path d="M1 3h8l2 2h11v16H1z" fill="#ffe08a" /><path d="M1 6h21" stroke="#f2c550" /><path d="M5 13h14v9h-4v-4H9v4H5z" fill="#3fb3e6" /></>],
  ['Clock', <><circle cx="12" cy="12" r="11" fill="#d9e4ec" stroke="#8fa3b0" /><path d="M12 12V2A10 10 0 0 1 22 12Z" fill="#e5cf93" /><path d="M12 3v10h7" stroke="#456" strokeWidth="2" fill="none" /></>],
  ['Gauge', <><circle cx="12" cy="12" r="10" fill="#eee9e2" stroke="#8c8682" strokeWidth="2" /><circle cx="12" cy="12" r="6" fill="none" stroke="#c9a58c" /><path d="M8 6l6 10" stroke="#c01818" strokeWidth="2" /></>],
  ['Chrome', <><circle cx="12" cy="12" r="11" fill="#4caf50" /><path d="M2.500 6.500A11 11 0 0 1 21.500 6.500L12 7L8 14Z" fill="#e2473b" /><path d="M21.500 6.500A11 11 0 0 1 11 23L16 14L12 7Z" fill="#fcc934" /><circle cx="12" cy="12" r="5.500" fill="#fff" /><circle cx="12" cy="12" r="4" fill="#4285f4" /></>],
  ['Toolbox', <><path d="M1 1h20v14H1z" fill="#e8e8ee" /><path d="M1 1h20v3H1z" fill="#b9bccb" /><path d="M4 7v6M8 7v4" stroke="#99a" /><path d="M4 13h19v9H4z" fill="#c62828" /><path d="M10 13v-3h7v3" stroke="#c62828" strokeWidth="2" fill="none" /><path d="M4 16h19" stroke="#e77" /></>],
  ['SQL tools', <><path d="M2 3a6 2 0 0 1 12 0v11a6 2 0 0 1-12 0z" fill="#f8b93a" /><ellipse cx="8" cy="3" rx="6" ry="2" fill="#ffe09a" /><path d="M17 2h6v6M1 17v6h6" stroke="#4caf50" strokeWidth="2" fill="none" /><path d="M12 22l9-9M12 14l9 8" stroke="#bbb" strokeWidth="2" /></>],
  ['Visual Studio', <path d="M17 0l7 3v18l-7 3L7 15l-5 4-2-1V7l2-1 5 4zM17 7l-6 5 6 5zM2 9v6l3-3z" fill="#9b5de0" fillRule="evenodd" />],
  ['Servers', <><circle cx="9" cy="9" r="8" fill="#2d8fe0" /><path d="M3 5q5-5 7 1t-5 6zM11 9l5-3v5z" fill="#8cd04c" /><path d="M12 9l9-2v15l-7 1-2-3z" fill="#b8bec4" /><path d="M14 11v10M18 10v11" stroke="#7d848b" /></>],
  ['NinjaTrader', <><path d="M2 18Q-1 6 10 3Q4 11 9 16Z" fill="#6b4a42" /><path d="M8 4Q16 1 18 13L14 17Q13 8 8 4Z" fill="#a08070" /><path d="M17 2Q25 6 22 18L17 12Z" fill="#b0141c" /></>],
];

function Taskbar() {
  return (
    <TaskbarWrapper>
      <AppRow>
        {apps.map(([label, art]) => (
          <AppButton key={label} aria-label={label} $current={label === 'NinjaTrader'}>
            <svg width="24" height="24" viewBox="0 0 24 24">{art}</svg>
            {label === 'NinjaTrader' && <AppBadge>8</AppBadge>}
          </AppButton>
        ))}
      </AppRow>
      <Tray>
        <svg width="14" height="24" viewBox="0 0 14 24"><path d="M1 15l6-7 6 7" stroke="#fff" strokeWidth="2" fill="none" /></svg>
        <svg width="17" height="24" viewBox="0 0 17 24"><path d="M4 18a4 4 0 0 1 0-7a5 5 0 0 1 9 0a4 4 0 0 1 1 7z" fill="#1c8ade" /></svg>
        <svg width="17" height="24" viewBox="0 0 17 24"><path d="M5 7h11v8H3v-4M10 15v4M6 19h8M1 6h3v4H1z" stroke="#fff" fill="none" /></svg>
        <svg width="18" height="24" viewBox="0 0 18 24"><path d="M1 10h3l4-4v13l-4-4H1zM10 10q2 2 0 5M12 8q4 4 0 9M14 6q5 6 0 13" stroke="#fff" fill="none" /></svg>
        <ClockText>
          <span>10:12 PM</span>
          <span>3/18/2021</span>
        </ClockText>
        <NotifyButton aria-label="Notifications">
          <svg width="26" height="32" viewBox="0 0 26 32">
            <path d="M2 7h17v12h-9l-4 4v-4H2z" fill="#fff" />
            <path d="M5 10h11M5 13h11M5 16h8" stroke="#111" />
            <circle cx="17" cy="25" r="7" fill="#333" stroke="#888" strokeWidth="2" />
          </svg>
          <NotifyCount>1</NotifyCount>
        </NotifyButton>
      </Tray>
      <Toast>1 new notification</Toast>
    </TaskbarWrapper>
  );
}

export default function App() {
  return (
    <Page>
      <GlobalStyle />
      <Toolbar />
      <Workspace>
        <ChartColumn>
          <PricePane />
          <SignalPane />
          <AtrPane />
          <TimeAxis />
          <ScrollRow>
            <ScrollArrow aria-label="Scroll left">◂</ScrollArrow>
            <ScrollThumb />
            <ScrollArrow aria-label="Scroll right">▸</ScrollArrow>
          </ScrollRow>
        </ChartColumn>
        <ChartTrader />
      </Workspace>
      <Tabs />
      <Taskbar />
    </Page>
  );
}

/* ---------- styles ---------- */

const GlobalStyle = createGlobalStyle`
  * {
    box-sizing: border-box;
  }
  body {
    margin: 0;
    background: #2d2d30;
    color: #ccc;
    font-family: "Liberation Sans", Arial, sans-serif;
    font-size: 12px;
  }
  button, input, select {
    font: inherit;
    color: inherit;
    margin: 0;
    padding: 0;
    border: 0;
    border-radius: 0;
    background: none;
  }
  svg {
    display: block;
    flex: none;
  }
`

const Page = styled.div`
  display: flex;
  flex-direction: column;
  min-height: 100vh;
  overflow: hidden;
`

const ToolbarWrapper = styled.header`
  position: relative;
  display: flex;
  align-items: center;
  height: 25px;
  background: #1e1e1e;
  border-top: 1px solid #3f3f46;
  border-bottom: 1px solid #3f3f46;
`

const ChartMenu = styled.button`
  display: flex;
  justify-content: flex-end;
  align-items: center;
  width: 39px;
  height: 23px;
  padding-right: 6px;
  overflow: hidden;
  font-size: 14px;
  color: #fff;
  background: linear-gradient(#7d1a1c, #a01d20);
`

const SelectFrame = styled.span`
  display: grid;
  grid-template-columns: minmax(0, 1fr) auto;
  align-items: center;
  height: 21px;
  color: #ccc;
  background: #3f3f46;
  border: 1px solid #3f3f46;

  ${({ $disabled }) => $disabled && css`
    color: #666;
    background: #999;
    border-color: #888;
  `}
  ${({ $focused }) => $focused && css`
    border-color: #0e70c0;
  `}

  select {
    grid-area: 1 / 1 / 2 / 3;
    width: 100%;
    height: 19px;
    padding-left: ${({ $indent }) => ($indent ? '11px' : '5px')};
    appearance: none;
    opacity: 1;
  }
  svg {
    grid-area: 1 / 2 / 2 / 3;
    margin-right: 4px;
    pointer-events: none;
  }
`

const ToolSelects = styled.div`
  display: grid;
  grid-template-columns: 125px 125px;
  gap: 6px;
  margin-left: 18px;
`

const ToolIcons = styled.div`
  display: flex;
  gap: 11px;
  margin-left: 11px;
`

const ToolButton = styled.button`
  display: block;
`

const WindowButtons = styled.div`
  display: flex;
  gap: 4px;
  margin-left: auto;
`

const tones = {
  light: 'linear-gradient(#8f8c8e, #b5b2b4)',
  red: 'linear-gradient(#c96464, #a31216)',
  dark: 'linear-gradient(#555, #111)',
};

const WindowButton = styled.button`
  display: grid;
  place-items: center;
  width: 15px;
  height: 16px;
  background: ${({ $tone }) => tones[$tone ?? 'dark']};
  border: 1px solid #999;
`

const RemoteBarWrapper = styled.div`
  position: absolute;
  top: -1px;
  left: 46.65%;
  width: 30.2%;
  height: 26px;
  display: grid;
  color: #dce6f2;

  > svg {
    grid-area: 1 / 1;
    width: 100%;
    height: 100%;
  }
`

const RemoteContent = styled.div`
  grid-area: 1 / 1;
  display: grid;
  grid-template-columns: 1fr auto 1fr;
  align-items: center;
  padding: 0 36px 2px 36px;
`

const RemoteIcons = styled.div`
  display: flex;
  align-items: center;
  gap: ${({ $wide }) => ($wide ? '14px' : '10px')};
  justify-content: ${({ $wide }) => ($wide ? 'flex-end' : 'flex-start')};
`

const Workspace = styled.main`
  flex: 1;
  display: grid;
  grid-template-columns: minmax(0, 1fr) 155px;
  padding-top: 6px;
`

const ChartColumn = styled.section`
  display: flex;
  flex-direction: column;
  background: #222;
  border-top: 1px solid #3f3f46;
`

const Pane = styled.div`
  position: relative;
  height: ${({ $height }) => $height}px;
`

const MainPane = styled.div`
  position: relative;
  flex: 1;
  min-height: 500px;
`

const DrawingSvg = styled.svg`
  position: absolute;
  inset: 0;
  width: 100%;
  height: 100%;
`

const Label = styled.span`
  position: absolute;
  transform: translateY(-50%);
  font-size: 11px;
  line-height: 12px;
  white-space: pre;
`

const AxisLabel = styled(Label)`
  color: ${({ $color }) => $color ?? '#ccc'};
  ${({ $center }) => $center && css`transform: translate(-50%, -50%);`}
`

const Ghost = styled(Label)`
  color: ${({ $faded }) => ($faded ? 'rgba(160, 180, 225, 0.75)' : '#ccc')};
  transform: translate(${({ $start }) => ($start ? '0' : '-50%')}, -50%);
`

const Comment = styled.p`
  position: absolute;
  transform: translate(-50%, -50%);
  display: flex;
  flex-direction: column;
  align-items: center;
  margin: 0;
  font-size: 21px;
  line-height: 24px;
  color: #000;
  white-space: nowrap;
  text-shadow: 1px 3px 3px rgba(0, 0, 0, 0.45);
`

const ScrollRow = styled.div`
  display: flex;
  height: 14px;
  background: #333;
  border-bottom: 1px solid #2d2d30;
`

const ScrollArrow = styled.button`
  width: 8px;
  height: 12px;
  font-size: 8px;
  line-height: 12px;
  color: #fff;
  background: #000;
`

const ScrollThumb = styled.div`
  width: 34px;
  margin-left: auto;
  background: linear-gradient(#666, #444);
  border: 1px solid #777;
`

const TraderPanel = styled.aside`
  padding: 0 3px 0 6px;
  border-left: 1px solid #3f3f46;
`

const OrderGrid = styled.div`
  display: grid;
  grid-template-columns: 1fr 1fr;
  gap: 6px;
`

const OrderButton = styled.button`
  height: 27px;
  font-size: 14px;
  border: 1px solid #3f3f46;
`

const PositionGrid = styled.div`
  display: grid;
  grid-template-columns: 1fr 1fr;
  gap: 1px;
  margin-top: 7px;
  border: 1px solid #3f3f46;
  background: #3f3f46;

  span {
    display: grid;
    place-items: center;
    height: 27px;
    background: #1b1b1c;
  }
  span:last-child {
    grid-column: 1 / 3;
  }
`

const FieldGrid = styled.div`
  display: grid;
  grid-template-columns: 84px 1fr;
  gap: 6px;
  margin-top: 12px;
`

const Field = styled.label`
  display: flex;
  flex-direction: column;
  grid-column: ${({ $full }) => ($full ? '1 / 3' : 'auto')};

  > span:first-child {
    height: 22px;
    line-height: 18px;
  }
`

const QtyBox = styled.span`
  display: flex;
  align-items: center;
  height: 21px;
  padding: 0 4px 0 9px;
  background: #3f3f46;

  input {
    width: 100%;
    min-width: 0;
  }
`

const Quotes = styled.table`
  margin-top: 4px;
  border-collapse: collapse;

  th, td {
    height: 22px;
    padding: 0;
    font-weight: normal;
    text-align: left;
  }
  th {
    width: 17px;
  }
  td:nth-child(2) {
    width: 67px;
  }
`

const TabStrip = styled.nav`
  display: flex;
  align-items: flex-start;
  gap: 1px;
  height: 31px;
  padding-left: 18px;
  overflow: hidden;
`

const Tab = styled.button`
  height: 22px;
  padding: 0 20px 0 6px;
  font-size: 13px;
  white-space: pre;
  background: #3f3f46;

  ${({ $active }) => $active && css`
    height: 25px;
    padding-bottom: 2px;
    color: #1285dd;
    background: #1e1e1e;
    border: 1px solid #0e78cc;
    border-top: 0;
  `}
`

const AddTab = styled.button`
  display: grid;
  place-items: center;
  width: 23px;
  height: 22px;
  background: #3f3f46;
`

const TaskbarWrapper = styled.footer`
  position: relative;
  display: flex;
  justify-content: space-between;
  height: 35px;
  background: #02050a;
  border-top: 1px solid #3f3f46;
`

const AppRow = styled.div`
  display: flex;
  margin-left: -11px;
`

const AppButton = styled.button`
  display: flex;
  align-items: center;
  justify-content: center;
  width: 49px;
  height: 34px;
  padding-top: 5px;
  background: ${({ $current }) => ($current ? '#2b2d30' : 'none')};
`

const AppBadge = styled.span`
  margin: 10px 0 0 -10px;
  font-size: 13px;
  font-weight: bold;
  color: #fff;
`

const Tray = styled.div`
  display: flex;
  align-items: center;
  gap: 5px;
  color: #fff;

  > svg {
    margin-top: 4px;
  }
`

const ClockText = styled.div`
  display: flex;
  flex-direction: column;
  align-items: center;
  align-self: flex-start;
  margin-left: 2px;
  font-family: "Open Sans", sans-serif;
  font-size: 12px;
  line-height: 17px;
`

const NotifyButton = styled.button`
  display: flex;
  align-items: center;
  width: 40px;
  height: 34px;
  margin-right: 8px;
  padding-left: 9px;
  overflow: hidden;
  background: #1a1f24;
`

const NotifyCount = styled.span`
  margin: 16px 0 0 -13px;
  font-size: 12px;
`

const Toast = styled.div`
  position: absolute;
  right: 0;
  bottom: 34px;
  padding: 0 3px 0 4px;
  font-family: "Open Sans", sans-serif;
  font-size: 12px;
  line-height: 19px;
  color: #555;
  background: #fff;
  white-space: nowrap;
`
